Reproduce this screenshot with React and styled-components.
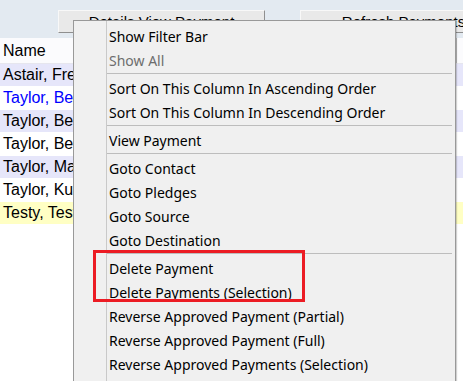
import React from 'react';
import styled, { createGlobalStyle } from 'styled-components';

const GlobalStyle = createGlobalStyle`
  html, body {
    margin: 0;
    padding: 0;
    background: #ffffff;
    overflow: hidden;
  }
  #root {
    width: 463px;
    height: 381px;
    position: relative;
    overflow: hidden;
  }
`;

const rows = [
  { name: 'Astair, Fred', tone: 'alt' },
  { name: 'Taylor, Bella', tone: 'link' },
  { name: 'Taylor, Ben', tone: 'alt' },
  { name: 'Taylor, Beth', tone: 'plain' },
  { name: 'Taylor, Mary', tone: 'alt' },
  { name: 'Taylor, Kurt', tone: 'plain' },
  { name: 'Testy, Tester', tone: 'current' },
];

const menuGroups = [
  [
    { label: 'Show Filter Bar' },
    { label: 'Show All', disabled: true },
  ],
  [
    { label: 'Sort On This Column In Ascending Order' },
    { label: 'Sort On This Column In Descending Order' },
  ],
  [{ label: 'View Payment' }],
  [
    { label: 'Goto Contact' },
    { label: 'Goto Pledges' },
    { label: 'Goto Source' },
    { label: 'Goto Destination' },
  ],
];

const rowColours = {
  alt: '#e6e6fa',
  plain: '#ffffff',
  link: '#ffffff',
  current: '#ffffc4',
};

function App() {
  return (
    <>
      <GlobalStyle />
      <Page>
        <Toolbar>
          <ToolButton>Details View Payment</ToolButton>
          <ToolButton>Refresh Payments</ToolButton>
        </Toolbar>
        <Grid>
          <HeaderRow>
            <HeaderCell>Name</HeaderCell>
            <HeaderCell />
          </HeaderRow>
          {rows.map((r) => (
            <Row key={r.name} tone={r.tone}>
              <Cell tone={r.tone}>{r.name}</Cell>
              <Cell tone={r.tone} />
            </Row>
          ))}
        </Grid>

        <Menu>
          {menuGroups.map((group, i) => (
            <React.Fragment key={i}>
              {group.map((item) => (
                <MenuItem key={item.label} disabled={item.disabled}>
                  {item.label}
                </MenuItem>
              ))}
              <Separator />
            </React.Fragment>
          ))}
          <Highlight>
            <MenuItem>Delete Payment</MenuItem>
            <MenuItem>Delete Payments (Selection)</MenuItem>
          </Highlight>
          <MenuItem>Reverse Approved Payment (Partial)</MenuItem>
          <MenuItem>Reverse Approved Payment (Full)</MenuItem>
          <MenuItem>Reverse Approved Payments (Selection)</MenuItem>
        </Menu>
      </Page>
    </>
  );
}

export default App;

const Page = styled.div`
  width: 463px;
  height: 381px;
  background: #ffffff;
  font-family: "Liberation Sans", Arial, sans-serif;
`;

const Toolbar = styled.div`
  display: flex;
  gap: 35px;
  height: 38px;
  box-sizing: border-box;
  padding: 10px 0 0 58px;
  background: #e3eaf1;
  white-space: nowrap;
`;

const ToolButton = styled.div`
  flex: none;
  width: 207px;
  height: 23px;
  box-sizing: border-box;
  display: flex;
  align-items: center;
  justify-content: center;
  background: #e9e9e9;
  border: 1px solid #f8f8f8;
  border-right-color: #8f8f8f;
  border-bottom-color: #8f8f8f;
  font-size: 15px;
  color: #000;
`;

const Grid = styled.div`
  display: flex;
  flex-direction: column;
`;

const HeaderRow = styled.div`
  display: grid;
  grid-template-columns: 457px 1fr;
  height: 26px;
  box-sizing: border-box;
  background: #fbfbfd;
  border-bottom: 1px solid #e6e6ee;
`;

const HeaderCell = styled.div`
  display: flex;
  align-items: center;
  padding-left: 3px;
  font-size: 16px;
  color: #000;
  border-right: 2px solid #c4c4c4;
  &:last-child {
    border-right: none;
  }
`;

const Row = styled.div`
  display: grid;
  grid-template-columns: 457px 1fr;
  height: 23px;
  background: ${(p) => rowColours[p.tone]};
`;

const Cell = styled.div`
  display: flex;
  align-items: center;
  padding-left: 3px;
  font-size: 16px;
  white-space: nowrap;
  color: ${(p) => (p.tone === 'link' ? '#0000ff' : '#000000')};
  border-bottom: 1px solid #ffffff;
`;

const Menu = styled.div`
  position: absolute;
  left: 73px;
  top: 20px;
  width: 383px;
  box-sizing: border-box;
  padding: 3px 1px 30px;
  background-color: #f0f0f0;
  background-image: linear-gradient(
    to right,
    transparent 32px,
    #c9c9c9 32px,
    #c9c9c9 33px,
    transparent 33px
  );
  border: 1px solid #999999;
  box-shadow: 1px 1px 1px rgba(0, 0, 0, 0.18);
  font-family: "Noto Sans", "Open Sans", sans-serif;
  font-size: 14px;
`;

const MenuItem = styled.div`
  height: 24px;
  display: flex;
  align-items: center;
  padding-left: 34px;
  white-space: nowrap;
  color: ${(p) => (p.disabled ? '#6d6d6d' : '#000000')};
`;

const Separator = styled.div`
  height: 1px;
  margin: 1px 2px 2px 32px;
  background: #bdbdbd;
`;

const Highlight = styled.div`
  position: relative;

  &::after {
    content: '';
    position: absolute;
    left: 18px;
    top: -6px;
    width: 212px;
    height: 52px;
    box-sizing: border-box;
    border: 3px solid #ec1c24;
    pointer-events: none;
  }
`;
